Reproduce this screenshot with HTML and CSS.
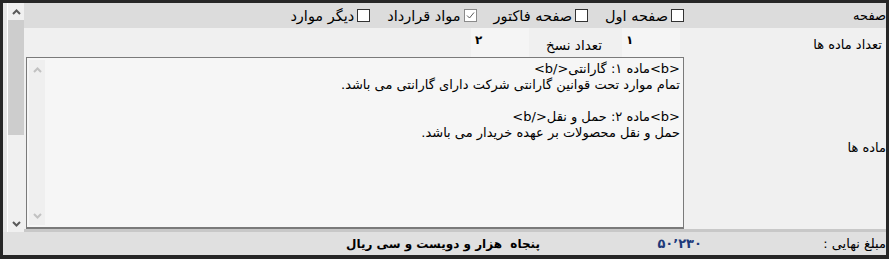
FILE: index.html
```html
<!DOCTYPE html>
<html>
<head>
  <title>قرارداد</title>
  <link rel="stylesheet" href="styles.css">
</head>
<body>
<div class="frame">
  <div class="upper">
    <div class="edge"></div>
    <div class="vscroll">
      <div class="arrow"><svg width="9" height="6" viewBox="0 0 9 6"><polyline points="1,5 4.5,1.5 8,5" fill="none" stroke="#5a5a5a" stroke-width="2"/></svg></div>
      <div class="thumb"></div>
      <div class="track"></div>
      <div class="arrow"><svg width="9" height="6" viewBox="0 0 9 6"><polyline points="1,1 4.5,4.5 8,1" fill="none" stroke="#5a5a5a" stroke-width="2"/></svg></div>
    </div>
    <div class="main" dir="rtl">
      <div class="row row-pages">
        <div class="lbl tight">صفحه</div>
        <div class="checks">
          <label class="chk"><span class="box"></span>صفحه اول</label>
          <label class="chk"><span class="box"></span>صفحه فاکتور</label>
          <label class="chk"><span class="box on"><svg width="11" height="11" viewBox="0 0 11 11"><polyline points="2,5.5 4.5,8 9,2.5" fill="none" stroke="#5a5a5a" stroke-width="1"/></svg></span>مواد قرارداد</label>
          <label class="chk"><span class="box"></span>دیگر موارد</label>
        </div>
      </div>
      <div class="row row-count">
        <div class="lbl">تعداد ماده ها</div>
        <div class="num">۱</div>
        <div class="lbl2">تعداد نسخ</div>
        <div class="num">۲</div>
      </div>
      <div class="row row-items">
        <div class="lbl tight">ماده ها</div>
        <div class="memo">
          <div class="memo-text">
            <div>&lt;b&gt;ماده ۱: گارانتی&lt;/b&gt;</div>
            <div>تمام موارد تحت قوانین گارانتی شرکت دارای گارانتی می باشد.</div>
            <div>&nbsp;</div>
            <div>&lt;b&gt;ماده ۲: حمل و نقل&lt;/b&gt;</div>
            <div>حمل و نقل محصولات بر عهده خریدار می باشد.</div>
          </div>
          <div class="memo-scroll">
            <svg width="9" height="6" viewBox="0 0 9 6"><polyline points="1,5 4.5,1.5 8,5" fill="none" stroke="#c2c2c2" stroke-width="2"/></svg>
            <svg width="9" height="6" viewBox="0 0 9 6"><polyline points="1,1 4.5,4.5 8,1" fill="none" stroke="#c2c2c2" stroke-width="2"/></svg>
          </div>
        </div>
      </div>
      <div class="sep"></div>
    </div>
  </div>
  <div class="footer" dir="rtl">
    <div class="flbl">مبلغ نهایی :</div>
    <div class="amount">۵۰٬۲۳۰</div>
    <div class="words">پنجاه  هزار و دویست و سی ریال</div>
  </div>
</div>
</body>
</html>
```

FILE: styles.css
```css
body {
  margin: 0;
  background-color: #262626;
  font-family: "DejaVu Sans", sans-serif;
  font-size: 13px;
  color: #000;
}

.frame {
  margin: 3px 3px 0 3px;
  width: 883px;
  height: 252px;
  overflow: hidden;
  display: flex;
  flex-direction: column;
}

.upper {
  display: flex;
  height: 229px;
}

.edge {
  width: 4px;
  background-color: #e6e6e6;
  border-right: 1px solid #ffffff;
}

.vscroll {
  width: 16px;
  background-color: #f0f0f0;
  display: flex;
  flex-direction: column;
}
.vscroll .arrow {
  height: 17px;
  display: flex;
  align-items: center;
  justify-content: center;
}
.vscroll .thumb {
  height: 115px;
  background-color: #cdcdcd;
}
.vscroll .track { flex: 1; }

.main {
  flex: 1;
  display: flex;
  flex-direction: column;
  background-color: #f0f0f0;
}

.row { display: flex; }

.lbl {
  width: 192px;
  padding-right: 4px;
  flex: none;
  white-space: nowrap;
}
.lbl.tight { padding-right: 0; width: 196px; }

.row-pages {
  height: 25px;
  background-color: #dcdcdc;
  align-items: center;
}
.checks {
  display: flex;
  gap: 17px;
  margin-right: 6px;
  font-size: 14.5px;
}
.chk {
  display: flex;
  align-items: center;
  gap: 3px;
  white-space: nowrap;
}
.box {
  width: 11px;
  height: 11px;
  border: 1px solid #333;
  background-color: #fff;
  display: flex;
}
.box.on { border-color: #8a8a8a; }

.row-count {
  height: 29px;
}
.row-count .lbl { padding-top: 9px; }
.num {
  width: 54px;
  margin-right: 10px;
  padding: 5px 0 0 4px;
  background-color: #f5f5f5;
  direction: ltr;
  text-align: left;
  font-weight: bold;
  font-size: 12px;
}
.row-count .num + .lbl2 + .num { margin-right: 0; }
.lbl2 {
  width: 73px;
  padding: 9px 20px 0 0;
  white-space: nowrap;
  font-size: 13.5px;
}

.row-items {
  height: 172px;
}
.row-items .lbl {
  align-self: center;
  padding-top: 8px;
}
.memo {
  width: 656px;
  margin-right: 6px;
  border: 1px solid #7a7a7a;
  border-bottom-width: 2px;
  background-color: #f6f6f6;
  display: flex;
}
.memo-text {
  flex: 1;
  padding: 3px 3px 0 0;
  line-height: 16px;
  white-space: nowrap;
}
.memo-scroll {
  width: 16px;
  margin: 2px 0 2px 2px;
  background-color: #efefef;
  display: flex;
  flex-direction: column;
  justify-content: space-between;
  align-items: center;
  padding: 7px 0 6px;
}

.sep {
  height: 3px;
  background-color: #c8c8c8;
}

.footer {
  height: 23px;
  background-color: #e0e0e0;
  display: flex;
  align-items: center;
  font-weight: bold;
  font-size: 12px;
}
.flbl {
  width: 180px;
  flex: none;
  white-space: nowrap;
  font-weight: normal;
  font-size: 13px;
}
.amount {
  width: 166px;
  flex: none;
  color: #1e3a7a;
  font-size: 13px;
  letter-spacing: 5px;
  margin-left: -4px;
  padding-right: 4px;
}
.words { white-space: pre; }
```
